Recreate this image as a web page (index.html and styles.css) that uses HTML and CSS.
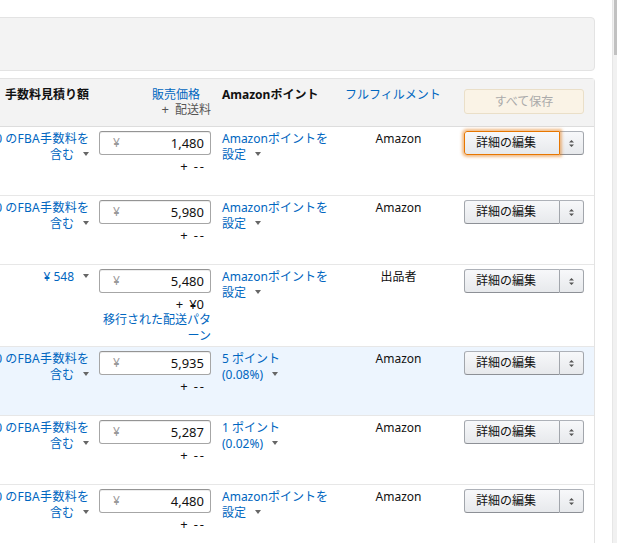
FILE: index.html
```html
<!DOCTYPE html>
<html lang="ja">
<head>
<meta charset="utf-8">
<title>在庫管理</title>
<link rel="stylesheet" href="styles.css">
</head>
<body>
<div class="page">
  <div class="panel"></div>
  <div class="table">
    <div class="row head">
      <div class="c1"><span class="hbold">手数料見積り額</span></div>
      <div class="c2 price-head">
        <div class="hlink pad-r">販売価格</div>
        <div class="hsub"><span class="plus">+</span>配送料</div>
      </div>
      <div class="c3"><span class="hbold">Amazonポイント</span></div>
      <div class="c4 left"><span class="hlink">フルフィルメント</span></div>
      <div class="c5"><button class="save-all" disabled>すべて保存</button></div>
    </div>

    <div class="row">
      <div class="c1 fee link"><div class="ln"><span class="nw">¥450 <span class="wide">のFBA手数料を</span></span></div><div class="ln">含む<span class="caret"></span></div></div>
      <div class="c2"><div class="price-box"><span class="yen">¥</span><span class="val">1,480</span></div><div class="ship first"><span class="plus">+</span><span class="dash">--</span></div></div>
      <div class="c3 link">Amazonポイントを<br>設定<span class="caret"></span></div>
      <div class="c4">Amazon</div>
      <div class="c5"><div class="btn-group"><span class="btn-main focus">詳細の編集</span><span class="btn-arrow"><svg width="5" height="7" viewBox="0 0 5 7"><path d="M2.5 0L5 2.5H0z M0 4.5H5L2.5 7z" fill="#555"/></svg></span></div></div>
    </div>

    <div class="row">
      <div class="c1 fee link"><div class="ln"><span class="nw">¥450 <span class="wide">のFBA手数料を</span></span></div><div class="ln">含む<span class="caret"></span></div></div>
      <div class="c2"><div class="price-box"><span class="yen">¥</span><span class="val">5,980</span></div><div class="ship first"><span class="plus">+</span><span class="dash">--</span></div></div>
      <div class="c3 link">Amazonポイントを<br>設定<span class="caret"></span></div>
      <div class="c4">Amazon</div>
      <div class="c5"><div class="btn-group"><span class="btn-main">詳細の編集</span><span class="btn-arrow"><svg width="5" height="7" viewBox="0 0 5 7"><path d="M2.5 0L5 2.5H0z M0 4.5H5L2.5 7z" fill="#555"/></svg></span></div></div>
    </div>

    <div class="row">
      <div class="c1 fee link"><div class="ln">¥ 548<span class="caret"></span></div></div>
      <div class="c2"><div class="price-box"><span class="yen">¥</span><span class="val">5,480</span></div><div class="ship first"><span class="plus">+</span>¥0</div><div class="ship link">移行された配送パタ<br>ーン</div></div>
      <div class="c3 link">Amazonポイントを<br>設定<span class="caret"></span></div>
      <div class="c4">出品者</div>
      <div class="c5"><div class="btn-group"><span class="btn-main">詳細の編集</span><span class="btn-arrow"><svg width="5" height="7" viewBox="0 0 5 7"><path d="M2.5 0L5 2.5H0z M0 4.5H5L2.5 7z" fill="#555"/></svg></span></div></div>
    </div>

    <div class="row hl">
      <div class="c1 fee link"><div class="ln"><span class="nw">¥450 <span class="wide">のFBA手数料を</span></span></div><div class="ln">含む<span class="caret"></span></div></div>
      <div class="c2"><div class="price-box"><span class="yen">¥</span><span class="val">5,935</span></div><div class="ship first"><span class="plus">+</span><span class="dash">--</span></div></div>
      <div class="c3 link">5 ポイント<br>(0.08%)<span class="caret"></span></div>
      <div class="c4">Amazon</div>
      <div class="c5"><div class="btn-group"><span class="btn-main">詳細の編集</span><span class="btn-arrow"><svg width="5" height="7" viewBox="0 0 5 7"><path d="M2.5 0L5 2.5H0z M0 4.5H5L2.5 7z" fill="#555"/></svg></span></div></div>
    </div>

    <div class="row">
      <div class="c1 fee link"><div class="ln"><span class="nw">¥450 <span class="wide">のFBA手数料を</span></span></div><div class="ln">含む<span class="caret"></span></div></div>
      <div class="c2"><div class="price-box"><span class="yen">¥</span><span class="val">5,287</span></div><div class="ship first"><span class="plus">+</span><span class="dash">--</span></div></div>
      <div class="c3 link">1 ポイント<br>(0.02%)<span class="caret"></span></div>
      <div class="c4">Amazon</div>
      <div class="c5"><div class="btn-group"><span class="btn-main">詳細の編集</span><span class="btn-arrow"><svg width="5" height="7" viewBox="0 0 5 7"><path d="M2.5 0L5 2.5H0z M0 4.5H5L2.5 7z" fill="#555"/></svg></span></div></div>
    </div>

    <div class="row">
      <div class="c1 fee link"><div class="ln"><span class="nw">¥450 <span class="wide">のFBA手数料を</span></span></div><div class="ln">含む<span class="caret"></span></div></div>
      <div class="c2"><div class="price-box"><span class="yen">¥</span><span class="val">4,480</span></div><div class="ship first"><span class="plus">+</span><span class="dash">--</span></div></div>
      <div class="c3 link">Amazonポイントを<br>設定<span class="caret"></span></div>
      <div class="c4">Amazon</div>
      <div class="c5"><div class="btn-group"><span class="btn-main">詳細の編集</span><span class="btn-arrow"><svg width="5" height="7" viewBox="0 0 5 7"><path d="M2.5 0L5 2.5H0z M0 4.5H5L2.5 7z" fill="#555"/></svg></span></div></div>
    </div>
  </div>
</div>
<div class="scrollbar"><div class="thumb"></div></div>
</body>
</html>
```
FILE: styles.css
```css
html, body {
  margin: 0;
  padding: 0;
  overflow: hidden;
  background: #fff;
}
body {
  font-family: "Noto Sans", "Noto Sans CJK JP", sans-serif;
  font-size: 12px;
  line-height: 16px;
  color: #111;
}
.page {
  margin-left: -10px;
  padding-top: 17px;
  width: 605px;
}
.panel {
  height: 52px;
  border: 1px solid #e3e3e3;
  border-radius: 4px;
  background: #f3f3f3;
}
.table {
  margin-top: 7px;
  border: 1px solid #e3e3e3;
  border-bottom: none;
  border-radius: 4px 4px 0 0;
}
.row {
  display: grid;
  grid-template-columns: 104px 120px 130px 107px 142px;
  box-sizing: border-box;
  min-height: 69px;
  padding: 4px 0 2px;
  border-bottom: 1px solid #e7e7e7;
}
.row.head {
  min-height: 48px;
  padding: 8px 0 0;
  background: #f3f3f3;
  border-bottom: 1px solid #dddddd;
}
.row.hl {
  background: #edf5fe;
}
.c1 {
  padding-right: 6px;
  text-align: right;
}
.c2 {
  padding: 0 4px;
}
.c3 {
  padding-left: 7px;
}
.c4 {
  text-align: center;
}
.c4.left {
  text-align: left;
}
.c5 {
  padding: 0 10px 0 12px;
}
.hbold {
  font-weight: bold;
  color: #111;
}
.hlink {
  color: #0066c0;
}
.price-head {
  text-align: right;
}
.hsub {
  color: #555;
  line-height: 12px;
}
.pad-r {
  padding-right: 11px;
}
.plus {
  display: inline-block;
  font-size: 13px;
  margin-right: 6px;
}
.link {
  color: #0066c0;
}
.fee .ln {
  display: flex;
  justify-content: flex-end;
  white-space: nowrap;
}
.nw {
  flex: none;
  white-space: nowrap;
}
.wide {
  letter-spacing: 0.3px;
  margin-right: -0.3px;
}
.caret {
  display: inline-block;
  width: 0;
  height: 0;
  border-left: 3.5px solid transparent;
  border-right: 3.5px solid transparent;
  border-top: 4px solid #666;
  margin-left: 9px;
  vertical-align: 3px;
}
.fee .caret {
  align-self: center;
  margin-top: -3px;
}
.price-box {
  box-sizing: border-box;
  height: 24px;
  display: flex;
  align-items: center;
  justify-content: space-between;
  padding: 0 6px 0 13px;
  border: 1px solid #a6a6a6;
  border-top-color: #949494;
  border-radius: 3px;
  background: #fff;
  box-shadow: inset 0 1px 0 rgba(0,0,0,.07);
}
.yen {
  color: #999;
  font-size: 12px;
}
.val {
  font-size: 13px;
  color: #111;
}
.ship {
  text-align: right;
  color: #111;
}
.ship.first {
  height: 16px;
  margin-top: 3px;
  padding-right: 7px;
  font-size: 13px;
  line-height: 16px;
}
.dash {
  letter-spacing: 2px;
  margin-right: -2px;
}
.ship.link {
  color: #0066c0;
  font-size: 12px;
}
.save-all {
  box-sizing: border-box;
  width: 120px;
  height: 25px;
  margin-top: 2px;
  border: 1px solid #eadfc8;
  border-radius: 3px;
  background: #faf3e6;
  color: #aaa;
  font-family: inherit;
  font-size: 12px;
  line-height: 16px;
  padding: 0;
}
.btn-group {
  display: flex;
  height: 24px;
}
.btn-main, .btn-arrow {
  box-sizing: border-box;
  height: 24px;
  display: flex;
  align-items: center;
  background: linear-gradient(#f7f8fa, #e7e9ec);
  border: 1px solid #adb1b8;
  border-color: #adb1b8 #a2a6ac #8d9096;
  color: #111;
}
.btn-main {
  width: 96px;
  padding-left: 11px;
  border-radius: 3px 0 0 3px;
}
.btn-main.focus {
  border-color: #e77600;
  box-shadow: 0 0 3px 2px rgba(228,121,17,.5);
  position: relative;
}
.btn-arrow {
  width: 24px;
  justify-content: center;
  border-left: none;
  border-radius: 0 3px 3px 0;
}
.scrollbar {
  position: fixed;
  top: 0;
  right: 0;
  width: 4px;
  height: 100%;
  background: #f1f1f1;
  border-left: 1px solid #e6e6e6;
}
.thumb {
  margin-left: 1px;
  height: 55px;
  background: #c1c1c1;
}
```
